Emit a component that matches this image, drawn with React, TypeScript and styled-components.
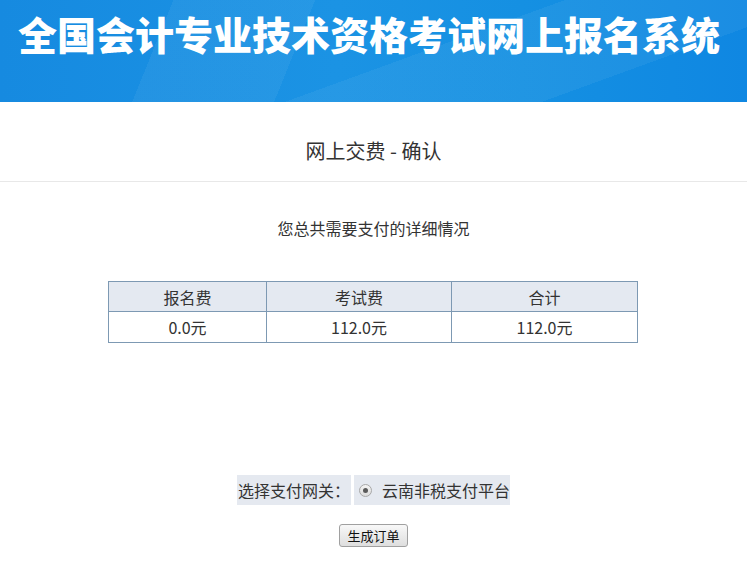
import React from "react";
import styled, { createGlobalStyle } from "styled-components";

const GlobalStyle = createGlobalStyle`
  html, body {
    margin: 0;
    padding: 0;
    background: #fff;
  }
  body {
    font-family: "Liberation Sans", "Noto Sans CJK SC", sans-serif;
    color: #333;
  }
`;

const Header = styled.div`
  height: 102px;
  box-sizing: border-box;
  padding: 14px 0 0 18px;
  background:
    linear-gradient(112deg, rgba(255, 255, 255, 0) 0%, rgba(255, 255, 255, 0) 22%, rgba(255, 255, 255, 0.05) 22%, rgba(255, 255, 255, 0.05) 40%, rgba(255, 255, 255, 0) 40%),
    linear-gradient(160deg, rgba(255, 255, 255, 0) 55%, rgba(255, 255, 255, 0.05) 55%, rgba(255, 255, 255, 0.05) 80%, rgba(255, 255, 255, 0) 80%),
    linear-gradient(90deg, #168ae0 0%, #1b93e4 45%, #1590e2 70%, #0f87e2 100%);
`;

const SiteTitle = styled.h1`
  margin: 0;
  font-family: "Noto Sans CJK SC", sans-serif;
  font-size: 39px;
  line-height: 39px;
  font-weight: 900;
  color: #fff;
  letter-spacing: 0;
  white-space: nowrap;
`;

const PageHead = styled.div`
  height: 80px;
  box-sizing: border-box;
  padding-top: 34px;
  border-bottom: 1px solid #e8e8e8;
  text-align: center;
`;

const PageTitle = styled.h2`
  margin: 0;
  font-family: "Noto Sans CJK SC", sans-serif;
  font-size: 20px;
  line-height: 30px;
  font-weight: 400;
  color: #333;
`;

const Content = styled.div`
  display: flex;
  flex-direction: column;
  align-items: center;
  padding-top: 36px;
`;

const Intro = styled.p`
  margin: 0;
  font-family: "Noto Sans CJK SC", sans-serif;
  font-size: 16px;
  line-height: 20px;
  color: #333;
`;

const FeeTable = styled.table`
  margin-top: 43px;
  margin-right: 1px;
  width: 530px;
  border-collapse: collapse;
  font-family: "Noto Sans CJK SC", sans-serif;
  font-size: 16px;
  color: #333;
`;

const HeadCell = styled.th<{ $w?: number }>`
  width: ${p => (p.$w ? `${p.$w}px` : "auto")};
  height: 29px;
  padding: 0;
  font-weight: 400;
  background: #e4e9f1;
  border: 1px solid #7d99b3;
`;

const Cell = styled.td`
  height: 30px;
  padding: 0;
  text-align: center;
  border: 1px solid #7d99b3;
`;

const GatewayRow = styled.div`
  margin-top: 132px;
  display: flex;
  gap: 3px;
  font-family: "Noto Sans CJK SC", sans-serif;
  font-size: 16px;
  color: #333;
`;

const GatewayBox = styled.div<{ $pad?: boolean }>`
  height: 30px;
  display: flex;
  align-items: center;
  background: #e5e9f0;
  padding: ${p => (p.$pad ? "0 0 0 5px" : "0 1px")};
`;

const Radio = styled.span`
  position: relative;
  width: 11px;
  height: 11px;
  margin-right: 10px;
  border-radius: 50%;
  border: 1px solid #a8a8a8;
  background: linear-gradient(#f4f4f4, #dcdcdc);
  &::after {
    content: "";
    position: absolute;
    left: 3px;
    top: 3px;
    width: 5px;
    height: 5px;
    border-radius: 50%;
    background: #5a5a5a;
  }
`;

const SubmitButton = styled.button`
  margin-top: 19px;
  height: 23px;
  padding: 0 7px;
  font-family: "Noto Sans CJK SC", sans-serif;
  font-size: 13px;
  line-height: 21px;
  color: #111;
  background: linear-gradient(#f8f8f8, #dedede);
  border: 1px solid #a0a0a0;
  border-radius: 3px;
  cursor: pointer;
`;

const fees = { signup: "0.0元", exam: "112.0元", total: "112.0元" };

const App = () => {
  return (
    <>
      <GlobalStyle />
      <Header>
        <SiteTitle>全国会计专业技术资格考试网上报名系统</SiteTitle>
      </Header>
      <PageHead>
        <PageTitle>网上交费 - 确认</PageTitle>
      </PageHead>
      <Content>
        <Intro>您总共需要支付的详细情况</Intro>
        <FeeTable>
          <thead>
            <tr>
              <HeadCell $w={157}>报名费</HeadCell>
              <HeadCell $w={184}>考试费</HeadCell>
              <HeadCell>合计</HeadCell>
            </tr>
          </thead>
          <tbody>
            <tr>
              <Cell>{fees.signup}</Cell>
              <Cell>{fees.exam}</Cell>
              <Cell>{fees.total}</Cell>
            </tr>
          </tbody>
        </FeeTable>
        <GatewayRow>
          <GatewayBox>选择支付网关：</GatewayBox>
          <GatewayBox $pad>
            <Radio />
            云南非税支付平台
          </GatewayBox>
        </GatewayRow>
        <SubmitButton>生成订单</SubmitButton>
      </Content>
    </>
  );
};

export default App;
